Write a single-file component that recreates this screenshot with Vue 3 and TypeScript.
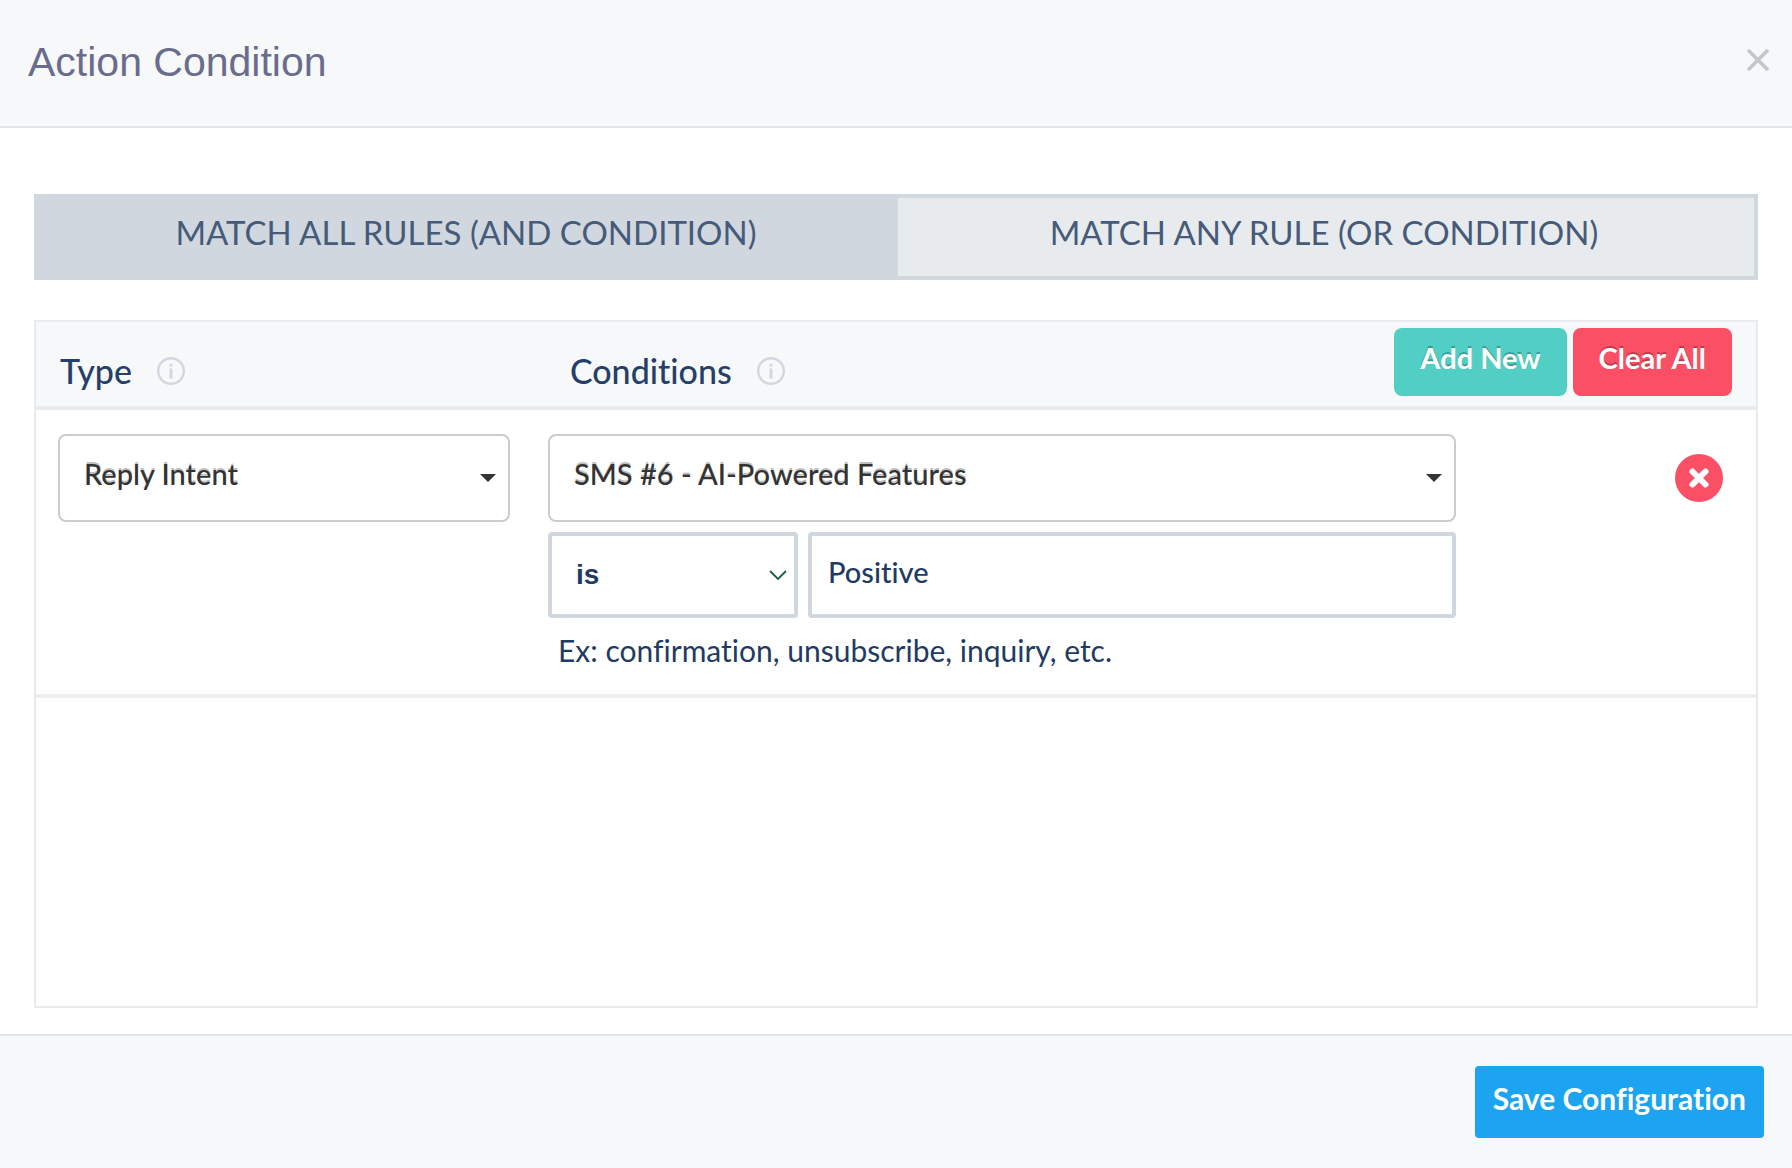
<script setup lang="ts">
import { ref } from 'vue'

type MatchMode = 'all' | 'any'

const matchMode = ref<MatchMode>('all')
const ruleType = ref('Reply Intent')
const message = ref('SMS #6 - AI-Powered Features')
const operator = ref('is')
const value = ref('Positive')

const modes: { id: MatchMode; label: string }[] = [
  { id: 'all', label: 'MATCH ALL RULES (AND CONDITION)' },
  { id: 'any', label: 'MATCH ANY RULE (OR CONDITION)' },
]
</script>

<template>
  <div class="dialog" role="dialog" aria-labelledby="dialog-title">
    <header class="dialog-header">
      <h1 id="dialog-title">Action Condition</h1>
      <button class="close" type="button" aria-label="Close">
        <svg width="24" height="24" viewBox="0 0 24 24" aria-hidden="true">
          <path d="M2 2 22 22M22 2 2 22" fill="none" stroke="#c4c6c9" stroke-width="3.6" />
        </svg>
      </button>
    </header>

    <main class="dialog-body">
      <div class="modes">
        <button
          v-for="mode in modes"
          :key="mode.id"
          type="button"
          class="mode"
          :class="{ active: matchMode === mode.id }"
          :aria-pressed="matchMode === mode.id"
          @click="matchMode = mode.id"
        >
          {{ mode.label }}
        </button>
      </div>

      <section class="rules">
        <div class="rules-header">
          <div class="heading heading-type">
            <span id="type-label">Type</span>
            <svg class="info" width="28" height="28" viewBox="0 0 28 28" aria-hidden="true">
              <circle cx="14" cy="14" r="12.8" fill="none" stroke="#d0d7df" stroke-width="2.4" />
              <path d="M14 11.5V21.5M14 7V9.6" stroke="#d0d7df" stroke-width="3" />
            </svg>
          </div>
          <div class="heading heading-conditions">
            <span id="conditions-label">Conditions</span>
            <svg class="info" width="28" height="28" viewBox="0 0 28 28" aria-hidden="true">
              <circle cx="14" cy="14" r="12.8" fill="none" stroke="#d0d7df" stroke-width="2.4" />
              <path d="M14 11.5V21.5M14 7V9.6" stroke="#d0d7df" stroke-width="3" />
            </svg>
          </div>
          <div class="actions">
            <button type="button" class="btn add">Add New</button>
            <button type="button" class="btn clear">Clear All</button>
          </div>
        </div>

        <div class="rule">
          <div class="picker">
            <select v-model="ruleType" aria-labelledby="type-label">
              <option>Reply Intent</option>
            </select>
            <svg class="caret" width="16" height="8" viewBox="0 0 16 8" aria-hidden="true">
              <path d="M0 0H16L8 8Z" fill="#333" />
            </svg>
          </div>

          <div class="conditions">
            <div class="picker">
              <select v-model="message" aria-labelledby="conditions-label">
                <option>SMS #6 - AI-Powered Features</option>
              </select>
              <svg class="caret" width="16" height="8" viewBox="0 0 16 8" aria-hidden="true">
                <path d="M0 0H16L8 8Z" fill="#333" />
              </svg>
            </div>
            <div class="comparison">
              <div class="operator">
                <select v-model="operator" aria-label="Operator">
                  <option>is</option>
                </select>
                <svg class="chevron" width="18" height="10" viewBox="0 0 18 10" aria-hidden="true">
                  <path d="M1 1 9 9 17 1" fill="none" stroke="#1d5a4c" stroke-width="1.8" />
                </svg>
              </div>
              <input v-model="value" type="text" aria-label="Value" aria-describedby="value-hint" />
            </div>
            <p id="value-hint" class="hint">Ex: confirmation, unsubscribe, inquiry, etc.</p>
          </div>

          <button type="button" class="remove" aria-label="Remove rule">
            <svg width="48" height="48" viewBox="0 0 48 48" aria-hidden="true">
              <circle cx="24" cy="24" r="24" fill="#fa4f64" />
              <path d="M17.5 17.5 30.5 30.5M30.5 17.5 17.5 30.5" stroke="#fff" stroke-width="6" stroke-linecap="round" />
            </svg>
          </button>
        </div>
      </section>
    </main>

    <footer class="dialog-footer">
      <button type="button" class="save">Save Configuration</button>
    </footer>
  </div>
</template>

<style>
body {
  margin: 0;
  background: #fff;
}
</style>

<style scoped>
.dialog,
.dialog * {
  box-sizing: border-box;
}

.dialog {
  display: flex;
  flex-direction: column;
  min-height: 100vh;
  font-family: Lato, "Liberation Sans", sans-serif;
  font-size: 29px;
  font-variant-ligatures: none;
  line-height: 36px;
  color: #253f68;
}

button,
select,
input {
  margin: 0;
  font: inherit;
  font-variant-ligatures: none;
  color: inherit;
}

button {
  padding: 0;
  border: 0;
  background: none;
  cursor: pointer;
}

.dialog-header {
  display: flex;
  justify-content: space-between;
  align-items: flex-start;
  padding: 38px 22px 40px 28px;
  border-bottom: 2px solid #e2e4e7;
  background: #f7f8fa;
}

h1 {
  margin: 0;
  font: 400 41px/48px "Liberation Sans", sans-serif;
  color: #6a6c8d;
}

.close {
  display: flex;
  padding-top: 10px;
}

.dialog-body {
  flex: 1;
  display: flex;
  flex-direction: column;
  gap: 40px;
  padding: 66px 34px 26px;
}

.modes {
  display: grid;
  grid-template-columns: 860fr 856fr;
  border: 4px solid #d0d7df;
}

.mode {
  padding: 14px 4px 24px 0;
  background: #e8ebee;
  font-size: 33px;
  line-height: 40px;
  color: #465b79;
}

.mode.active {
  background: #d0d7df;
}

.rules {
  flex: 1;
  border: 2px solid #e8ebee;
}

.rules-header {
  display: flex;
  align-items: flex-start;
  padding: 6px 24px 10px;
  border-bottom: 4px solid #e8ebee;
  background: #f7f8fa;
}

.heading {
  display: flex;
  align-items: center;
  gap: 25px;
  padding-top: 23px;
  font-size: 34px;
  line-height: 40px;
  font-weight: 500;
}

.heading-type {
  width: 30.5%;
}

.heading-conditions {
  flex: 1;
}

.actions {
  display: flex;
  gap: 6px;
}

.btn {
  padding: 12px 26px 20px;
  border-radius: 8px;
  font-weight: 700;
  color: #fff;
  text-shadow: 0 -2px 0 rgba(0, 0, 0, 0.25);
}

.add {
  background: #51cfc4;
}

.clear {
  background: #fa4f64;
}

.rule {
  display: grid;
  grid-template-columns: 452fr 908fr 238fr;
  column-gap: 38px;
  align-items: start;
  padding: 24px 24px 24px 22px;
  border-bottom: 4px solid #eee;
}

.picker,
.operator {
  display: grid;
  align-items: center;
}

.picker > *,
.operator > * {
  grid-area: 1 / 1;
}

.caret,
.chevron {
  justify-self: end;
  pointer-events: none;
}

.caret {
  margin-right: 14px;
}

.chevron {
  margin-right: 11px;
}

select {
  width: 100%;
  appearance: none;
  background: #fff;
}

.picker select {
  height: 88px;
  padding: 0 40px 8px 24px;
  border: 2px solid #ccc;
  border-radius: 8px;
  font-weight: 500;
  color: #333;
  text-shadow: 0 -2px 0 rgba(0, 0, 0, 0.25);
}

.conditions {
  display: flex;
  flex-direction: column;
  gap: 10px;
}

.comparison {
  display: grid;
  grid-template-columns: 250fr 648fr;
  gap: 10px;
}

.operator select,
input {
  height: 86px;
  border: 4px solid #d0d7df;
  border-radius: 4px;
  background: #fff;
  color: #1f3b64;
}

.operator select {
  padding: 0 40px 0 24px;
  font-family: "Liberation Sans", sans-serif;
  font-size: 28px;
  font-weight: 700;
}

input {
  width: 100%;
  padding: 0 16px 8px;
  font-weight: 500;
}

.hint {
  margin: 0;
  padding: 4px 10px 2px;
  font-size: 30px;
  color: #1f3b64;
}

.remove {
  display: flex;
  justify-self: end;
  margin: 20px 9px 0 0;
}

.dialog-footer {
  display: flex;
  justify-content: flex-end;
  padding: 30px 28px;
  border-top: 2px solid #e2e4e7;
  background: #f7f8fa;
}

.save {
  padding: 14px 18px 22px;
  border-radius: 4px;
  background: #1ca4f1;
  font-size: 30px;
  font-weight: 700;
  color: #fff;
}
</style>
